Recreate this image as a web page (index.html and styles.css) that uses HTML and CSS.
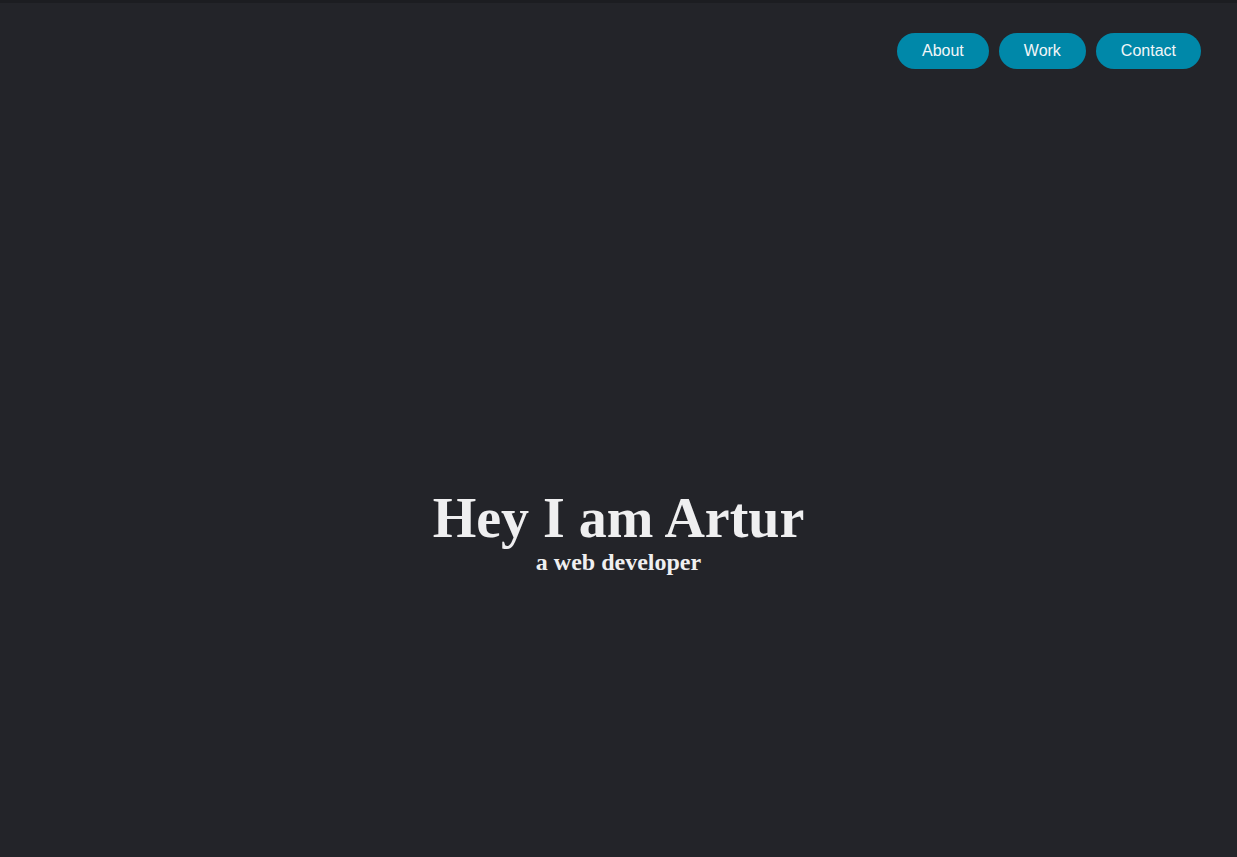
FILE: index.html
```html
<!DOCTYPE html>
<html lang="en">
<head>
<meta charset="utf-8">
<title>Artur</title>
<link rel="stylesheet" href="styles.css">
</head>
<body>
<header class="topbar">
  <nav class="nav">
    <a class="nav-btn" href="#about">About</a>
    <a class="nav-btn" href="#work">Work</a>
    <a class="nav-btn" href="#contact">Contact</a>
  </nav>
</header>
<main class="hero">
  <h1 class="hero-title">Hey I am Artur</h1>
  <h2 class="hero-sub">a web developer</h2>
</main>
</body>
</html>
```
FILE: styles.css
```css
html, body {
  margin: 0;
  padding: 0;
}
body {
  background: #232429;
  border-top: 3px solid #1c1d21;
  min-height: 100vh;
  box-sizing: border-box;
  font-family: "Liberation Serif", "Times New Roman", serif;
  color: #efeff0;
}
.topbar {
  display: flex;
  justify-content: flex-end;
  padding: 30px 36px 0 0;
}
.nav {
  display: flex;
  gap: 10px;
}
.nav-btn {
  display: block;
  background: #0088a9;
  color: #f2f6f8;
  font-family: "Liberation Sans", Arial, sans-serif;
  font-size: 16px;
  line-height: 18px;
  padding: 9px 25px;
  border-radius: 18px;
  text-decoration: none;
}
.hero {
  text-align: center;
  padding-top: 421px;
}
.hero-title {
  margin: 0;
  font-size: 56px;
  line-height: 56px;
  font-weight: bold;
}
.hero-sub {
  margin: 4px 0 0;
  font-size: 24px;
  line-height: 24px;
  font-weight: bold;
}
```
